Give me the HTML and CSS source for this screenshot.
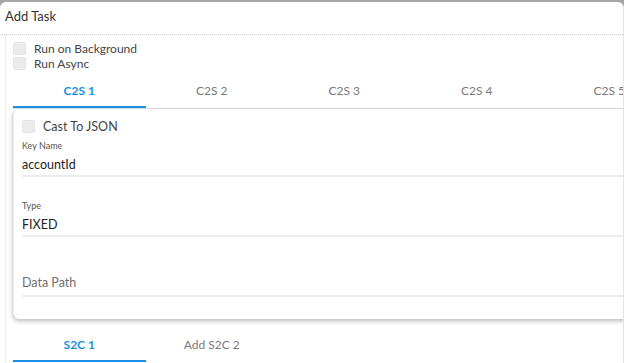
FILE: index.html
```html
<!DOCTYPE html>
<html lang="en">
<head>
    <meta charset="UTF-8">
    <title>Add Task</title>
    <link rel="stylesheet" href="styles.css">
</head>
<body>

    <div class="modal">
        <div class="modal-header">Add Task</div>

        <div class="modal-body">
            <label class="check"><span class="box"></span>Run on Background</label>
            <label class="check"><span class="box"></span>Run Async</label>

            <div class="tabs">
                <div class="tab active">C2S 1</div>
                <div class="tab">C2S 2</div>
                <div class="tab">C2S 3</div>
                <div class="tab">C2S 4</div>
                <div class="tab">C2S 5</div>
            </div>

            <div class="card">
                <label class="check cast"><span class="box"></span>Cast To JSON</label>

                <div class="field first">
                    <div class="field-label">Key Name</div>
                    <div class="field-value">accountId</div>
                </div>
                <div class="field">
                    <div class="field-label">Type</div>
                    <div class="field-value">FIXED</div>
                </div>
                <div class="field">
                    <div class="field-label"></div>
                    <div class="field-value placeholder">Data Path</div>
                </div>
            </div>

            <div class="tabs bottom">
                <div class="tab active">S2C 1</div>
                <div class="tab">Add S2C 2</div>
            </div>
        </div>
    </div>

</body>
</html>
```

FILE: styles.css
```css
html, body {
    margin: 0;
    padding: 0;
    height: 100%;
}
body {
    font-family: 'Lato', 'Liberation Sans', sans-serif;
    background: linear-gradient(#a6a6a6 0, #a6a6a6 8px, #f3f3f3 8px);
    color: #333;
    overflow: hidden;
}
.modal {
    margin-top: 2px;
    width: 623px;
    height: 361px;
    background-color: #ffffff;
    border-right: 1px solid #e4e4e4;
    border-radius: 6px 6px 0 0;
    overflow: hidden;
}
.modal-header {
    height: 26px;
    padding: 6px 5px 0;
    font-size: 13px;
    line-height: 16px;
    color: #333;
    border-bottom: 1px dotted #cfcfcf;
}
.modal-body {
    margin-left: 5px;
    padding: 6px 0 0 7px;
    border-left: 1px solid #f0f0f0;
    height: 400px;
}
.check {
    display: flex;
    align-items: center;
    height: 15px;
    font-size: 12px;
    color: #444;
}
.box {
    width: 11px;
    height: 11px;
    margin-right: 8px;
    background-color: #ececec;
    border: 1px solid #e3e3e3;
    border-radius: 2px;
}
.tabs {
    display: flex;
    width: 700px;
    border-bottom: 1px solid #e3e3e3;
}
.tab {
    flex: none;
    width: 132.5px;
    height: 31px;
    padding-top: 4px;
    line-height: 32px;
    text-align: center;
    font-size: 12px;
    color: #7a7a7a;
    border-bottom: 2px solid transparent;
}
.tab.active {
    color: #1a8fe3;
    font-weight: 700;
    border-bottom-color: #1a8fe3;
}
.tabs.bottom {
    margin-top: 6px;
    border-bottom: none;
}
.card {
    width: 640px;
    padding: 9px 0 22px 8px;
    background-color: #ffffff;
    border-left: 1px solid #ececec;
    border-radius: 6px;
    box-shadow: 0 2px 5px rgba(0, 0, 0, 0.28);
}
.check.cast {
    height: 16px;
    font-size: 12.5px;
}
.field {
    margin-top: 23px;
    border-bottom: 2px solid #ececec;
}
.field.first {
    margin-top: 6px;
}
.field-label {
    height: 12px;
    margin-bottom: 1px;
    font-size: 9px;
    line-height: 12px;
    color: #555;
}
.field-value {
    height: 22px;
    font-size: 12.5px;
    line-height: 23px;
    color: #222;
}
.field-value.placeholder {
    line-height: 19px;
    color: #6f6f6f;
}
```
